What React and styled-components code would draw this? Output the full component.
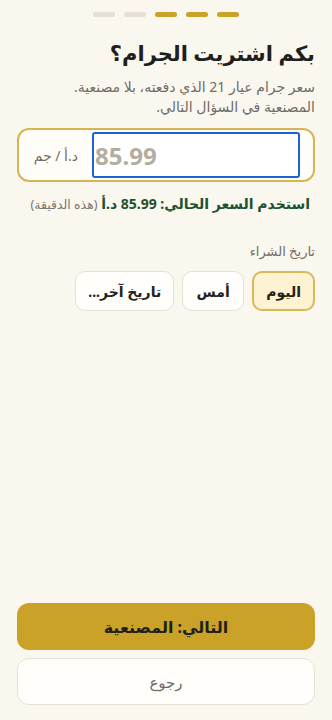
import React from "react";
import styled, { createGlobalStyle } from "styled-components";

const Global = createGlobalStyle`
  html, body { margin: 0; padding: 0; background: #faf7ef; }
  body { font-family: "Noto Sans", "DejaVu Sans", sans-serif; }
  * { box-sizing: border-box; }
`;

const Page = styled.div`
  direction: rtl;
  width: 332px;
  height: 720px;
  background: #faf7ef;
  padding: 12px 17px 15px;
  display: flex;
  flex-direction: column;
`;

const Progress = styled.div`
  display: flex;
  justify-content: center;
  gap: 9px;
`;

const Step = styled.span`
  width: 22px;
  height: 5px;
  border-radius: 3px;
  background: ${(p) => (p.$done ? "#c9a227" : "#e4dfd3")};
`;

const Title = styled.h1`
  margin: 20px 0 0;
  font-size: 21px;
  font-weight: 700;
  color: #1f1f1c;
  line-height: 32px;
`;

const Sub = styled.p`
  margin: 8px 0 0;
  font-size: 14px;
  line-height: 20px;
  color: #6f6c66;
`;

const Line = styled.span`
  display: block;
`;

const Card = styled.div`
  margin-top: 11px;
  height: 54px;
  border: 2px solid #d6b552;
  border-radius: 12px;
  background: #fffdf8;
  display: flex;
  align-items: center;
  padding: 0 13px;
  gap: 14px;
`;

const Input = styled.input`
  direction: ltr;
  width: 208px;
  height: 46px;
  border: 2px solid #1f62d6;
  border-radius: 3px;
  background: #fff;
  font: 700 24px "Noto Sans", "DejaVu Sans", sans-serif;
  color: #222;
  padding: 0 1px;
  outline: none;
  &::placeholder { color: #b3ada1; }
`;

const Unit = styled.span`
  font-size: 14px;
  color: #6f6c66;
  white-space: nowrap;
`;

const Helper = styled.div`
  margin-top: 12px;
  font-size: 14px;
  line-height: 20px;
  padding-right: 5px;
`;

const HelperStrong = styled.b`
  color: #1f5230;
  font-weight: 700;
`;

const HelperNote = styled.span`
  color: #7b776f;
  font-size: 12.5px;
`;

const Label = styled.div`
  margin-top: 26px;
  font-size: 13px;
  color: #6f6c66;
  line-height: 20px;
`;

const Chips = styled.div`
  margin-top: 10px;
  display: flex;
  gap: 8px;
`;

const Chip = styled.button`
  height: 40px;
  min-width: 62px;
  padding: 0 12px;
  border-radius: 10px;
  font: 700 14px "Noto Sans", "DejaVu Sans", sans-serif;
  color: #23221f;
  border: ${(p) => (p.$active ? "2px solid #d9b85a" : "1.5px solid #e6e1d6")};
  background: ${(p) => (p.$active ? "#fdf3d2" : "#fffefb")};
`;

const Spacer = styled.div`
  flex: 1;
`;

const Primary = styled.button`
  height: 47px;
  border: none;
  border-radius: 12px;
  background: #c9a227;
  color: #1f1f1c;
  font: 700 16px "Noto Sans", "DejaVu Sans", sans-serif;
`;

const Secondary = styled.button`
  margin-top: 8px;
  height: 47px;
  border: 1.5px solid #e6e1d6;
  border-radius: 12px;
  background: #fffefb;
  color: #6f6c66;
  font: 500 15px "Noto Sans", "DejaVu Sans", sans-serif;
`;

export default function App() {
  return (
    <>
      <Global />
      <Page>
        <Progress>
          <Step $done />
          <Step $done />
          <Step $done />
          <Step />
          <Step />
        </Progress>
        <Title>بكم اشتريت الجرام؟</Title>
        <Sub>
          <Line>سعر جرام عيار 21 الذي دفعته، بلا مصنعية.</Line>
          <Line>المصنعية في السؤال التالي.</Line>
        </Sub>
        <Card>
          <Input placeholder="85.99" inputMode="decimal" />
          <Unit>د.أ / جم</Unit>
        </Card>
        <Helper>
          <HelperStrong>استخدم السعر الحالي: 85.99 د.أ</HelperStrong>{" "}
          <HelperNote>(هذه الدقيقة)</HelperNote>
        </Helper>
        <Label>تاريخ الشراء</Label>
        <Chips>
          <Chip $active>اليوم</Chip>
          <Chip>أمس</Chip>
          <Chip>تاريخ آخر...</Chip>
        </Chips>
        <Spacer />
        <Primary>التالي: المصنعية</Primary>
        <Secondary>رجوع</Secondary>
      </Page>
    </>
  );
}
